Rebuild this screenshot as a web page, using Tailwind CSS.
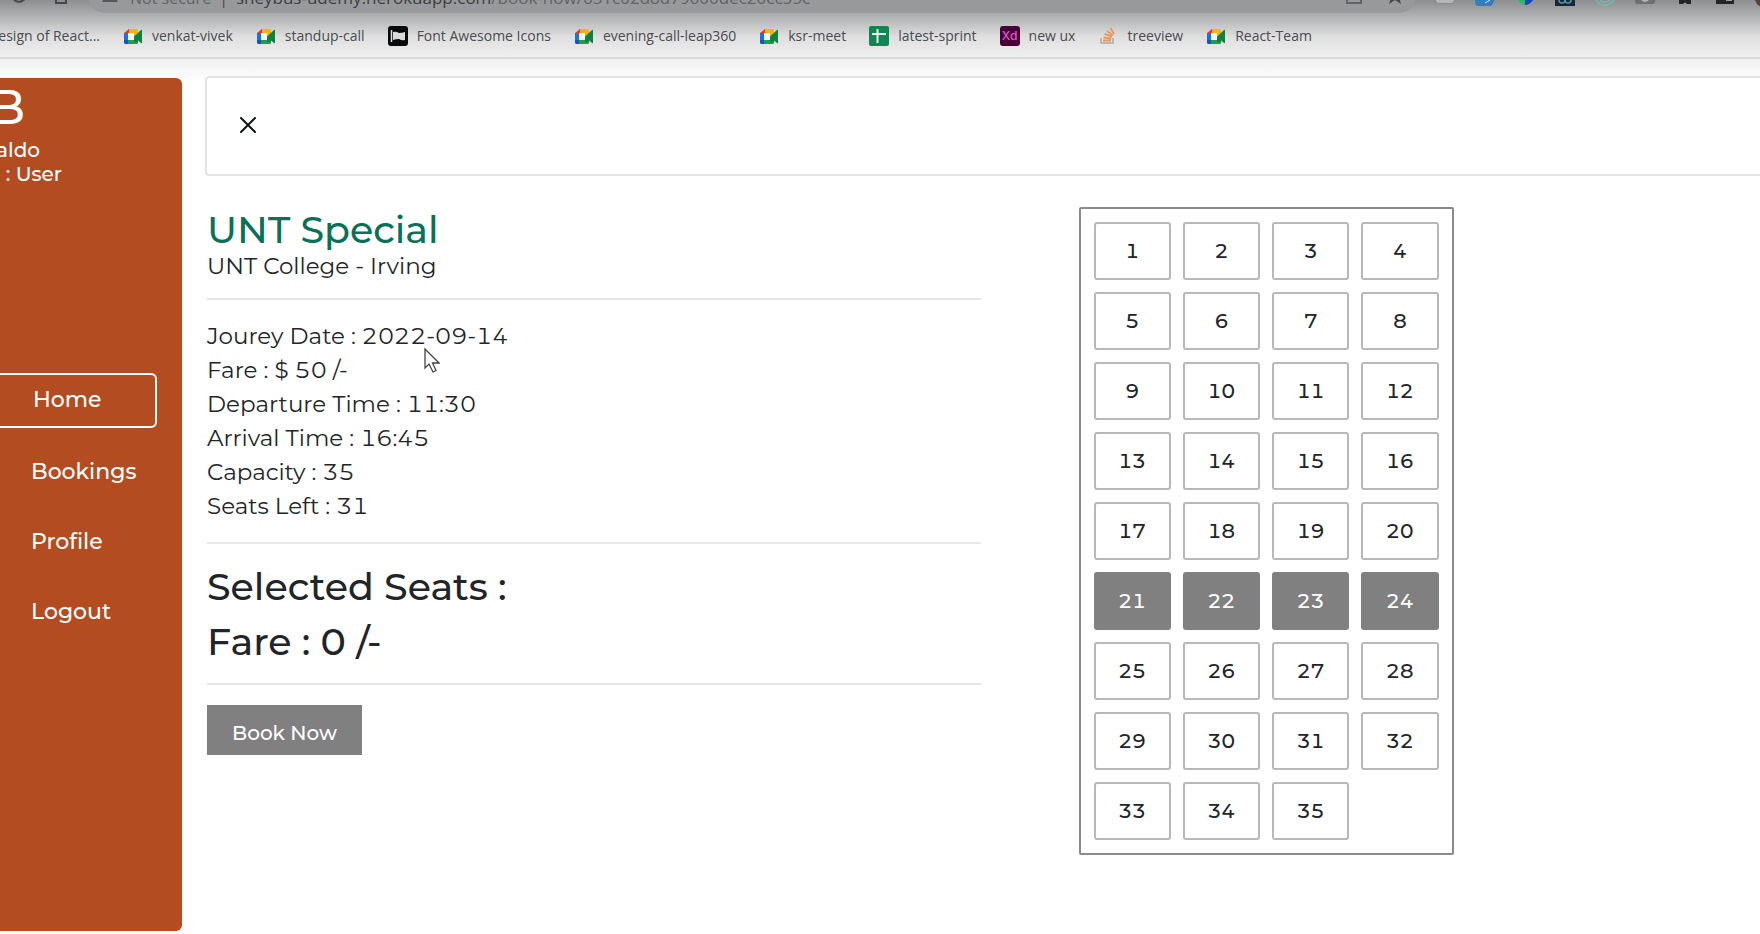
<!DOCTYPE html>
<html lang="en">
<head>
<meta charset="utf-8">
<meta name="viewport" content="width=device-width, initial-scale=1">
<title>Book Now</title>
<script src="https://cdn.jsdelivr.net/npm/@tailwindcss/browser@4"></script>
</head>
<body class="min-h-screen overflow-x-hidden bg-white bg-linear-to-b from-[#8d8e90] via-[#e0e0e0] via-[37px] to-white to-[82px] bg-no-repeat font-[Montserrat,Inter,sans-serif] text-[#212529]">

<svg class="hidden" aria-hidden="true">
  <symbol id="meet" viewBox="0 0 20 18">
    <path d="M5 2h9v4H5z" fill="#f6b500"/>
    <path d="M1 6l5-4v4z" fill="#e53935"/>
    <path d="M1 6h4v7H1z" fill="#1f6fe5"/>
    <path d="M1 13h4v4H2.500Q1 17 1 15.500z" fill="#1557b8"/>
    <path d="M5 13h10v2.500Q15 17 13.500 17H5z" fill="#1f9d4d"/>
    <path d="M11 6V2h2.500Q15 2 15 3.500V6l-4 4z" fill="#f6b500"/>
    <path d="M11 9.500L18 3q1-.5 1 .5v12q0 1-1 .5l-3-2.500V15h-4z" fill="#128040"/>
    <path d="M5 6h6v7H5z" fill="#f3f4f4"/>
  </symbol>
</svg>

<header class="border-b-2 border-[#d7d8d8]">
  <!-- Address bar row, scrolled so that only its lower edge shows -->
  <div class="flex h-[13px] items-end overflow-hidden text-[#4a4c50]">
    <div class="flex w-[88px] shrink-0 items-end gap-[24px] pb-[9px] pl-[10px]">
      <svg class="size-[18px]" viewBox="0 0 18 18" fill="none" stroke="#45474a" stroke-width="2"><path d="M16 8a7 7 0 1 1-3-5"/></svg>
      <svg class="size-[18px]" viewBox="0 0 18 18" fill="none" stroke="#45474a" stroke-width="2"><path d="M1 8l8-7 8 7M4 7v10h10V7"/></svg>
    </div>
    <div class="flex h-9 min-w-0 flex-1 items-center gap-2 rounded-full bg-[#98999b] pr-2.5 pl-[14px] font-['Open_Sans',sans-serif] text-base whitespace-nowrap">
      <svg class="mt-[9px] size-4 shrink-0 self-start" viewBox="0 0 16 16" fill="#55575a"><path d="M8 1l8 15H0z"/></svg>
      <span class="self-start pt-[9px] pl-1 text-[#606265]">Not secure</span>
      <span class="self-start pt-[9px]">|</span>
      <span class="self-start pt-[9px] text-[17px] leading-6 text-[#606265]"><span class="text-[#3c3e42]">sheybus-udemy.herokuapp.com</span>/book-now/631c02d8d79600dec20cc55c</span>
      <span class="flex-1"></span>
      <svg class="mt-[7px] h-5 w-4 shrink-0 self-start" viewBox="0 0 16 20" fill="none" stroke="#606265" stroke-width="2"><path d="M1 8v11h14v-5"/></svg>
      <svg class="mt-[9px] mr-0.5 ml-4 size-[18px] shrink-0 self-start" viewBox="0 0 18 18" fill="#45474a"><path d="M9 0l3 6 6 1-5 4 2 7-6-4-6 4 2-7-5-4 6-1z"/></svg>
    </div>
    <div class="flex h-[13px] w-[344px] shrink-0 items-start gap-5 pl-[19px]">
      <span class="h-1 w-5 shrink-0 rounded-b border border-t-0 border-[#8a8b8d] bg-[#b5b6b8]"></span>
      <svg class="h-[6px] w-5 shrink-0" viewBox="0 0 20 6"><path d="M0 0h20l-4 6H3q-3-1-3-4z" fill="#347db9"/><path d="M10 3l5-3" stroke="#d8e5ef"/></svg>
      <svg class="h-[5px] w-5 shrink-0" viewBox="0 0 20 5"><path d="M3 0h7v5q-5-1-7-5z" fill="#20c060"/><path d="M10 0h8q-3 5-8 5z" fill="#1746c2"/></svg>
      <svg class="h-[6px] w-5 shrink-0" viewBox="0 0 20 6"><path d="M0 0h20v6H0z" fill="#1d2430"/><path d="M4 0q0 3 3 3t3-3q0 3 3 3t3-3" fill="none" stroke="#4b96b5" stroke-width="1.500"/></svg>
      <svg class="h-[6px] w-5 shrink-0" viewBox="0 0 20 6" fill="none" stroke="#78b8ac" stroke-width="1.500"><path d="M1 0q4 5 9 5t9-5M5 0q5 4 10 0"/></svg>
      <svg class="h-1 w-5 shrink-0" viewBox="0 0 20 4"><path d="M0 0h20v2q0 2-2 2H2Q0 4 0 2z" fill="#6e7072"/><path d="M6 0q4 4 8 0z" fill="#b0b1b3"/></svg>
      <svg class="h-1 w-5 shrink-0" viewBox="0 0 20 4"><path d="M4 0h12v4h-4q-2-3-4 0H4z" fill="#242527"/></svg>
      <svg class="h-1 w-5 shrink-0" viewBox="0 0 20 4"><path d="M1 0h18v4H1z" fill="#242527"/><path d="M11 0h6v1h-6z" fill="#a0a1a3"/></svg>
      <svg class="h-2 w-5 shrink-0" viewBox="0 0 20 8"><path d="M0 0h20v8H10Q2 7 0 0z" fill="#603c38"/></svg>
    </div>
  </div>

  <nav aria-label="Bookmarks" class="flex h-11 items-center gap-[23px] pt-0.5 font-['Open_Sans',sans-serif] text-sm whitespace-nowrap text-[#484b50]">
    <a href="#" class="flex w-[100px] shrink-0 justify-end overflow-hidden">Design of React...</a>
    <a href="#" class="flex items-center gap-[9px]"><svg class="h-[18px] w-5"><use href="#meet"/></svg>venkat-vivek</a>
    <a href="#" class="flex items-center gap-[9px]"><svg class="h-[18px] w-5"><use href="#meet"/></svg>standup-call</a>
    <a href="#" class="flex items-center gap-[9px]"><svg class="size-5" viewBox="0 0 20 20"><rect width="20" height="20" rx="3" fill="#08090a"/><path d="M3.500 4v12" stroke="#ddd" stroke-width="1.500"/><path d="M5 6q3-1 6 1 3 0 6-1v8q-3 1-6-1-3 0-6 1z" fill="#d8d8d8"/></svg>Font Awesome Icons</a>
    <a href="#" class="flex items-center gap-[9px]"><svg class="h-[18px] w-5"><use href="#meet"/></svg>evening-call-leap360</a>
    <a href="#" class="flex items-center gap-[9px]"><svg class="h-[18px] w-5"><use href="#meet"/></svg>ksr-meet</a>
    <a href="#" class="flex items-center gap-[9px]"><svg class="size-5" viewBox="0 0 20 20"><rect width="20" height="20" rx="2" fill="#118552"/><path d="M3 8h14M8.500 3v14" stroke="#e8f2ec" stroke-width="2"/></svg>latest-sprint</a>
    <a href="#" class="flex items-center gap-[9px]"><span class="flex size-5 items-center justify-center rounded-[3px] bg-[#470137] font-[Inter,sans-serif] text-xs font-medium text-[#e754dc]">Xd</span>new ux</a>
    <a href="#" class="flex items-center gap-[9px]"><svg class="size-5" viewBox="0 0 20 20" fill="none"><path d="M3 12v5h12v-5" stroke="#a9a9aa" stroke-width="1.500"/><path d="M5 14.500h8M5.500 11.500l8 1M6.500 8l7.500 2.500M9 5l6 4.500M12.500 2l3.500 6" stroke="#e89a5c" stroke-width="2"/></svg>treeview</a>
    <a href="#" class="flex items-center gap-[9px]"><svg class="h-[18px] w-5"><use href="#meet"/></svg>React-Team</a>
  </nav>
</header>

<div class="flex items-start pt-[17px]">
  <aside class="mt-0.5 flex h-[853px] w-[182px] shrink-0 flex-col rounded-r-md bg-[#b44c21] text-white">
    <div class="flex w-[25px] justify-end overflow-hidden pt-1.5 text-5xl leading-[46px] font-medium">SB</div>
    <div class="mt-2 flex w-10 justify-end overflow-hidden text-xl leading-6 font-medium">Ronaldo</div>
    <div class="flex w-[62px] justify-end overflow-hidden text-xl leading-6 font-medium whitespace-nowrap">Role : User</div>
    <nav aria-label="Main menu" class="mt-[187px] flex flex-col gap-4 text-[22px] leading-[54px] font-medium">
      <a href="#" class="mr-[25px] mb-px flex h-[55px] items-center rounded-r-md border-2 border-l-0 border-white pb-0.5 pl-[33px]">Home</a>
      <a href="#" class="pl-[31px]">Bookings</a>
      <a href="#" class="pl-[31px]">Profile</a>
      <a href="#" class="pl-[31px]">Logout</a>
    </nav>
  </aside>

  <main class="ml-[23px] min-w-0 flex-1">
    <div class="flex h-[100px] items-center rounded-l-sm border-2 border-r-0 border-[#e3e3e3] bg-white pb-0.5 pl-[33px]">
      <button type="button" aria-label="Close menu" class="flex size-4"><svg class="size-4" viewBox="0 0 16 16" stroke="#10141a" stroke-width="2" stroke-linecap="round"><path d="M1 1l14 14M15 1L1 15"/></svg></button>
    </div>

    <div class="flex items-start pt-[31px]">
      <section class="w-1/2 pr-0.5 pl-0.5">
        <h1 class="text-[38px] leading-[46px] font-medium text-[#0b7058]">UNT Special</h1>
        <p class="text-[23px] leading-[26px]">UNT College - Irving</p>
        <hr class="mt-[19px] border-t-2 border-[#e3e3e3]">
        <div class="relative mt-[19px] text-[23px] leading-[34px] tabular-nums">
          <p>Jourey Date : 2022-09-14</p>
          <p>Fare : $ 50 /-</p>
          <p>Departure Time : 11:30</p>
          <p>Arrival Time : 16:45</p>
          <p>Capacity : 35</p>
          <p>Seats Left : 31</p>
          <svg class="absolute top-[29px] left-[217px] h-[25px] w-4" viewBox="0 0 16 25" fill="#fff" stroke="#404348" stroke-width="1.300"><path d="M1 1v19l4-4 4 8 3-1.500-3.500-7.500H15z"/></svg>
        </div>
        <hr class="mt-[19px] border-t-2 border-[#e8e8e8]">
        <div class="mt-[15px] text-[38px] leading-[55px] font-medium">
          <h2>Selected Seats :</h2>
          <h2>Fare : 0 /-</h2>
        </div>
        <hr class="mt-[14px] border-t-2 border-[#e5e5e5]">
        <button type="button" class="mt-5 h-[50px] w-[155px] bg-[#808080] pt-1.5 text-xl font-medium text-white">Book Now</button>
      </section>

      <section aria-label="Seats" class="ml-24 grid w-[375px] shrink-0 grid-cols-4 gap-3 rounded-xs border-2 border-[#8a8a8a] p-[13px] text-xl font-medium tabular-nums *:h-[58px] *:rounded-[3px] *:border-2 *:border-[#b8b8b8] *:disabled:border-[#808080] *:disabled:bg-[#808080] *:disabled:text-white">
        <button type="button">1</button><button type="button">2</button><button type="button">3</button><button type="button">4</button>
        <button type="button">5</button><button type="button">6</button><button type="button">7</button><button type="button">8</button>
        <button type="button">9</button><button type="button">10</button><button type="button">11</button><button type="button">12</button>
        <button type="button">13</button><button type="button">14</button><button type="button">15</button><button type="button">16</button>
        <button type="button">17</button><button type="button">18</button><button type="button">19</button><button type="button">20</button>
        <button type="button" disabled>21</button><button type="button" disabled>22</button><button type="button" disabled>23</button><button type="button" disabled>24</button>
        <button type="button">25</button><button type="button">26</button><button type="button">27</button><button type="button">28</button>
        <button type="button">29</button><button type="button">30</button><button type="button">31</button><button type="button">32</button>
        <button type="button">33</button><button type="button">34</button><button type="button">35</button>
      </section>
    </div>
  </main>
</div>
</body>
</html>
